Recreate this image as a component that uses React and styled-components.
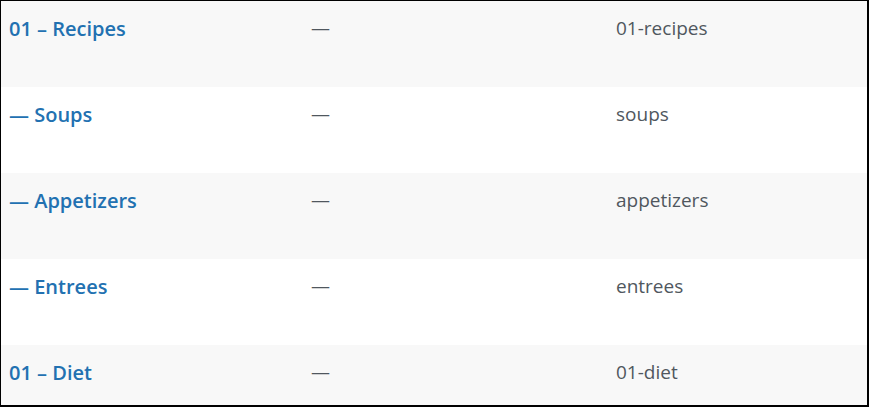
import React from "react"
import styled, { createGlobalStyle } from "styled-components"

const GlobalStyle = createGlobalStyle`
  html, body {
    margin: 0;
    padding: 0;
    background: #ffffff;
  }
  body {
    font-family: "Open Sans", "Noto Sans", "Liberation Sans", sans-serif;
  }
`

const terms = [
  { name: "01 – Recipes", description: "—", slug: "01-recipes" },
  { name: "— Soups", description: "—", slug: "soups" },
  { name: "— Appetizers", description: "—", slug: "appetizers" },
  { name: "— Entrees", description: "—", slug: "entrees" },
  { name: "01 – Diet", description: "—", slug: "01-diet" },
]

const Frame = styled.div`
  box-sizing: border-box;
  width: 869px;
  height: 407px;
  overflow: hidden;
  border-top: 1px solid #000;
  border-left: 1px solid #000;
  border-right: 2px solid #000;
  border-bottom: 2px solid #000;
  background: #fff;
`

const Row = styled.div`
  display: grid;
  grid-template-columns: 302px 305px 1fr;
  height: 86px;
  background: ${(p) => (p.$striped ? "#f8f8f8" : "#ffffff")};
`

const Cell = styled.div`
  box-sizing: border-box;
  padding: 13px 8px 0 8px;
  font-size: 19px;
  line-height: 28px;
  color: #50575e;
  white-space: nowrap;
`

const NameCell = styled(Cell)`
  padding-top: 14px;
  font-size: 20px;
`

const NameLink = styled.a`
  color: #2271b1;
  font-weight: 600;
  text-decoration: none;
  cursor: pointer;
`

export default function App() {
  return (
    <>
      <GlobalStyle />
      <Frame>
        {terms.map((t, i) => (
          <Row key={t.slug} $striped={i % 2 === 0}>
            <NameCell>
              <NameLink>{t.name}</NameLink>
            </NameCell>
            <Cell>{t.description}</Cell>
            <Cell>{t.slug}</Cell>
          </Row>
        ))}
      </Frame>
    </>
  )
}
